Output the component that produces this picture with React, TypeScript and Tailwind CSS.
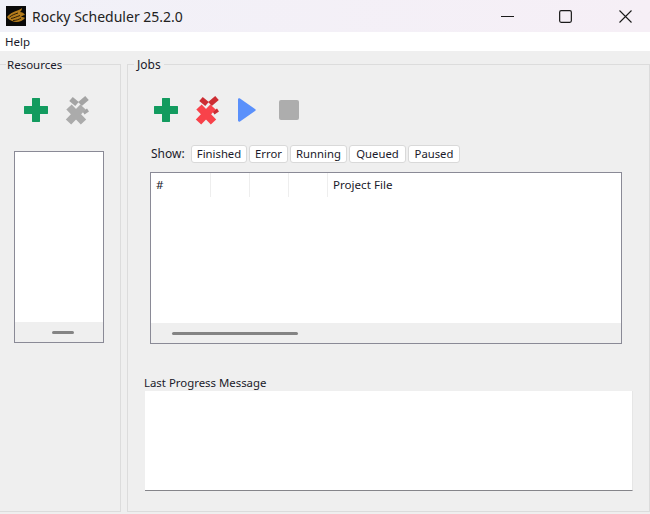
const font = { fontFamily: '"Noto Sans", "Open Sans", sans-serif' };

function Plus() {
  return (
    <svg width="26" height="26" viewBox="0 0 26 26" className="block shrink-0">
      <path d="M9 1.500c0-.3.200-.5.500-.5h7c.3 0 .5.200.5.500V9h7.500c.3 0 .5.200.5.500v7c0 .3-.2.500-.5.500H17v7.500c0 .3-.2.500-.5.500h-7c-.3 0-.5-.2-.5-.5V17H1.500c-.3 0-.5-.2-.5-.5v-7c0-.3.200-.5.500-.5H9V1.500z" fill="#129b5f" />
    </svg>
  );
}

function Cross({ front, back }: { front: string; back: string }) {
  return (
    <svg width="26" height="30" viewBox="0 0 26 30" className="block shrink-0">
      <path d="M6 4l6 5M22 3l-7 6" stroke={back} strokeWidth="5.500" fill="none" />
      <path d="M18.500 18l4.500-3" stroke={back} strokeWidth="3.500" fill="none" />
      <path d="M4 12l14.500 15M18 12L3.500 27" stroke={front} strokeWidth="7.500" fill="none" />
    </svg>
  );
}

function Logo() {
  return (
    <svg width="20" height="20" viewBox="0 0 20 20" className="block shrink-0">
      <rect width="20" height="20" fill="#0a0a0a" />
      <path d="M1 11C3 8 7 6 10 5c3-1 5-2 6-3 0 2-1 3-2 4 2 0 4 1 5 3-2 0-3 1-4 2 2 0 3 0 4 1-3 4-9 5-13 3-2-1-4-2-5-4z" fill="#b47c1c" />
      <path d="M3.500 11C6 9 9 8 12 7M5 12.500c3-.5 6-2 9-3M7 14.500c3 0 6-1 8-2.500" stroke="#1c1205" strokeWidth="0.900" fill="none" />
    </svg>
  );
}

function Chip({ w, children }: { w: string; children: string }) {
  return (
    <div className={`h-[18px] flex items-center justify-center bg-white border border-[#d9d9d9] rounded-[3px] text-[11.3px] text-[#1a1a2a] ${w}`}>
      {children}
    </div>
  );
}

export default function App() {
  return (
    <div className="w-[650px] h-[514px] flex flex-col bg-[#efefef] overflow-hidden" style={font}>
      <div className="h-8 shrink-0 flex items-center pl-[6px] bg-gradient-to-r from-[#f1f1f8] to-[#f6eff6]">
        <Logo />
        <span className="ml-[6px] text-[14px] text-[#222]">Rocky Scheduler 25.2.0</span>
        <div className="ml-auto flex items-center">
          <div className="w-[13px] h-[1px] bg-[#1a1a1a] mr-[45px]" />
          <svg width="13" height="13" viewBox="0 0 13 13" className="mr-[47px]">
            <rect x="0.650" y="0.650" width="11.700" height="11.700" rx="1.500" fill="none" stroke="#1a1a1a" strokeWidth="1.200" />
          </svg>
          <svg width="13" height="13" viewBox="0 0 13 13" className="mr-[18px]">
            <path d="M.5.500l12 12M12.500.500l-12 12" fill="none" stroke="#1a1a1a" strokeWidth="1.100" />
          </svg>
        </div>
      </div>
      <div className="h-[19px] shrink-0 bg-white flex items-center pl-[5px] text-[11.5px] text-[#1a1a2a]">Help</div>
      <div className="flex-1 flex pb-[2px]">
        <section className="relative w-[121px] shrink-0 mt-[13px] border-r border-b border-t border-[#dcdcdc] pt-[30px] pl-[14px]">
          <span className="absolute left-[6px] -top-[8px] bg-[#efefef] px-[1px] text-[11.5px] leading-[16px] text-[#1a1a2a]">Resources</span>
          <div className="flex items-center gap-[16px] pl-[9px] h-[30px]">
            <Plus />
            <Cross front="#ababab" back="#a4a4a4" />
          </div>
          <div className="mt-[26px] w-[90px] h-[192px] border border-[#8a8a96] bg-white flex flex-col">
            <div className="flex-1" />
            <div className="h-[20px] bg-[#efefef] flex items-center pl-[37px]">
              <div className="w-[22px] h-[3px] rounded-full bg-[#848484]" />
            </div>
          </div>
        </section>
        <section className="relative ml-[6px] w-[523px] shrink-0 mt-[13px] border border-[#dcdcdc] pt-[30px] pl-[16px]">
          <span className="absolute left-[6px] -top-[8px] bg-[#efefef] px-[3px] text-[12px] leading-[16px] text-[#1a1a2a]">Jobs</span>
          <div className="flex items-center h-[30px] pl-[9px]">
            <Plus />
            <div className="ml-[16px]"><Cross front="#f8424a" back="#cc2d33" /></div>
            <svg width="20" height="26" viewBox="0 0 20 26" className="ml-[15px]">
              <path d="M2 2.500c0-1 1-1.500 2-1L19 12c1 .5 1 1.500 0 2L4 24.500c-1 .5-2 0-2-1z" fill="#5a90fb" />
            </svg>
            <div className="ml-[23px] w-[20px] h-[20px] rounded-[2px] bg-[#adadad]" />
          </div>
          <div className="mt-[20px] flex items-center pl-[7px] h-[18px] text-[12px] text-[#1a1a2a]">
            <span className="w-[40px]">Show:</span>
            <div className="flex gap-[2px]">
              <Chip w="w-[56px]">Finished</Chip>
              <Chip w="w-[39px]">Error</Chip>
              <Chip w="w-[57px]">Running</Chip>
              <Chip w="w-[57px]">Queued</Chip>
              <Chip w="w-[52px]">Paused</Chip>
            </div>
          </div>
          <div className="mt-[9px] ml-[6px] w-[472px] h-[172px] border border-[#8a8a96] bg-white flex flex-col">
            <div className="h-[24px] flex text-[11.6px] text-[#1a1a2a]">
              <div className="w-[60px] border-r border-[#eeeeee] pl-[5px] flex items-center">#</div>
              <div className="w-[39px] border-r border-[#eeeeee]" />
              <div className="w-[39px] border-r border-[#eeeeee]" />
              <div className="w-[39px] border-r border-[#eeeeee]" />
              <div className="pl-[5px] flex items-center">Project File</div>
            </div>
            <div className="flex-1" />
            <div className="h-[20px] bg-[#efefef] pl-[21px] flex items-center">
              <div className="w-[126px] h-[3px] rounded-full bg-[#848484]" />
            </div>
          </div>
          <div className="mt-[31px] text-[11.4px] leading-[16px] text-[#1a1a2a]">Last Progress Message</div>
          <div className="ml-[1px] w-[488px] h-[100px] bg-white border-b border-[#85858a] border-r border-r-[#e6e6e6]" />
        </section>
      </div>
    </div>
  );
}
